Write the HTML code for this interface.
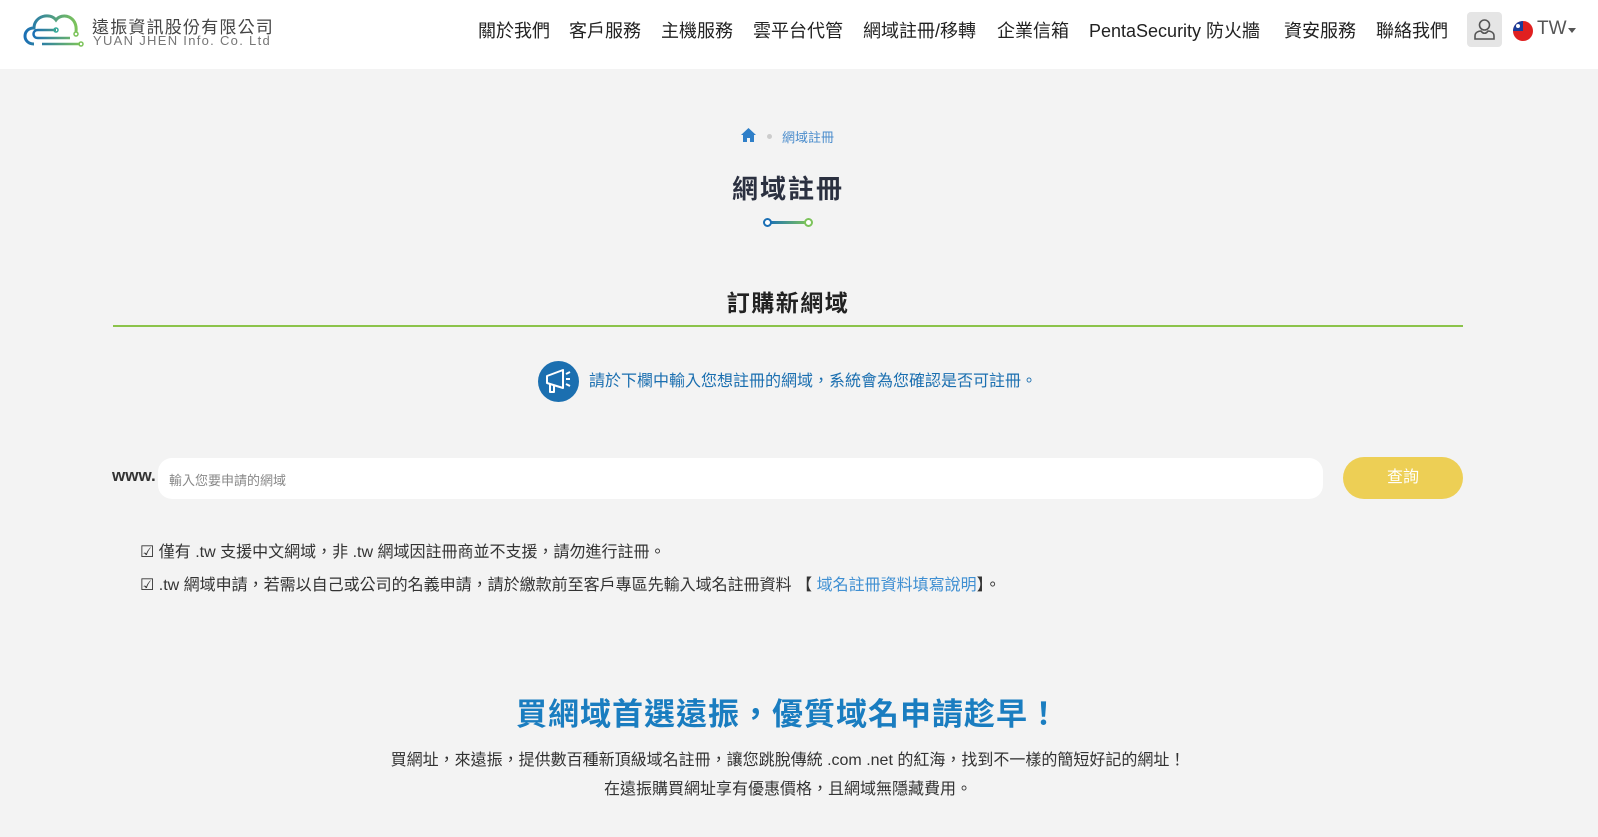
<!DOCTYPE html>
<html><head><meta charset="utf-8"><style>
*{margin:0;padding:0;box-sizing:border-box}
body{width:1598px;height:837px;overflow:hidden;background:#f3f3f3;font-family:"Liberation Sans","Noto Sans CJK TC",sans-serif;color:#333;position:relative}
.hdr{position:absolute;left:0;top:0;width:1598px;height:69px;background:#fff}
.abs{position:absolute;white-space:nowrap}
.nav{top:17px;font-size:18px;color:#222}
.c{left:0;width:1576px;text-align:center}
</style></head><body>
<div class="hdr">
<svg class="abs" style="left:20px;top:8px" width="66" height="44" viewBox="0 0 66 44">
<defs><linearGradient id="g" x1="0" x2="1"><stop offset="0" stop-color="#1a6fb5"/><stop offset="1" stop-color="#7cc35a"/></linearGradient></defs>
<path d="M14 36 C2 36 2 20 14 20 C14 8 30 4 36 12 C42 4 58 8 56 24" fill="none" stroke="url(#g)" stroke-width="3"/>
<path d="M36 22 H18 C12 22 12 30 18 30 H50 M22 36 H60" fill="none" stroke="url(#g)" stroke-width="2.5"/>
<circle cx="36" cy="22" r="2" fill="none" stroke="#3a9" stroke-width="1.5"/><circle cx="61" cy="36" r="2" fill="none" stroke="#7cc35a" stroke-width="1.5"/><circle cx="56" cy="26" r="2" fill="none" stroke="#7cc35a" stroke-width="1.5"/>
</svg>
<div class="abs" style="left:92px;top:13px;font-size:17px;color:#444;letter-spacing:1.2px">遠振資訊股份有限公司</div>
<div class="abs" style="left:93px;top:33px;font-size:13px;color:#777;letter-spacing:1.3px">YUAN JHEN Info. Co. Ltd</div>
<div class="abs nav" style="left:478px">關於我們</div>
<div class="abs nav" style="left:569px">客戶服務</div>
<div class="abs nav" style="left:661px">主機服務</div>
<div class="abs nav" style="left:753px">雲平台代管</div>
<div class="abs nav" style="left:863px">網域註冊/移轉</div>
<div class="abs nav" style="left:997px">企業信箱</div>
<div class="abs nav" style="left:1089px">PentaSecurity 防火牆</div>
<div class="abs nav" style="left:1284px">資安服務</div>
<div class="abs nav" style="left:1376px">聯絡我們</div>
<div class="abs" style="left:1467px;top:12px;width:35px;height:35px;background:#e5e5e5;border-radius:4px"></div>
<svg class="abs" style="left:1472px;top:17px" width="25" height="25" viewBox="0 0 25 25" fill="none" stroke="#555" stroke-width="1.6"><circle cx="12.5" cy="8" r="5"/><path d="M3 22 V19 C3 15 7 14 9 14 C11 17 14 17 16 14 C18 14 22 15 22 19 V22 Z"/></svg>
<svg class="abs" style="left:1513px;top:21px" width="20" height="20" viewBox="0 0 20 20"><circle cx="10" cy="10" r="10" fill="#e02020"/><path d="M0 10 A10 10 0 0 1 10 0 V10Z" fill="#1a3d9a"/><circle cx="5" cy="5" r="2" fill="#fff"/></svg>
<div class="abs" style="left:1537px;top:18px;font-size:19px;color:#555">TW</div>
<div class="abs" style="left:1568px;top:28px;border:4px solid transparent;border-top:5px solid #555"></div>
</div>
<svg class="abs" style="left:741px;top:128px" width="15" height="14" viewBox="0 0 15 14"><path d="M7.5 0 L15 7 H13 V14 H9 V10 H6 V14 H2 V7 H0Z" fill="#2f7fc8"/></svg>
<div class="abs" style="left:767px;top:134px;width:5px;height:5px;border-radius:50%;background:#ccc"></div>
<div class="abs" style="left:782px;top:127px;font-size:13px;color:#4a8ccc">網域註冊</div>
<div class="abs c" style="top:169px;font-size:26px;font-weight:bold;color:#2b3040;letter-spacing:2px">網域註冊</div>
<div class="abs" style="left:768px;top:221px;width:40px;height:3px;background:linear-gradient(90deg,#1a6fb5,#7cc35a)"></div>
<div class="abs" style="left:763px;top:218px;width:9px;height:9px;border-radius:50%;background:#fff;border:2px solid #1a6fb5"></div>
<div class="abs" style="left:804px;top:218px;width:9px;height:9px;border-radius:50%;background:#fff;border:2px solid #7cc35a"></div>
<div class="abs c" style="top:284px;font-size:23px;font-weight:bold;color:#222;letter-spacing:1.5px">訂購新網域</div>
<div class="abs" style="left:113px;top:325px;width:1350px;height:2px;background:#8bc34a"></div>
<svg class="abs" style="left:538px;top:361px" width="41" height="41" viewBox="0 0 41 41"><circle cx="20.5" cy="20.5" r="20.5" fill="#1b6fb0"/><g fill="none" stroke="#fff" stroke-width="2" stroke-linejoin="round"><path d="M9 15 L25 9 V27 L9 22Z"/><path d="M12 23 V31 H16 V24"/><path d="M28 13 L32 11 M28 18 H32 M28 23 L32 25"/></g></svg>
<div class="abs" style="left:589px;top:367px;font-size:16px;color:#1b6fb0">請於下欄中輸入您想註冊的網域，系統會為您確認是否可註冊。</div>
<div class="abs" style="left:112px;top:466px;font-size:17px;font-weight:bold;color:#333">www.</div>
<div class="abs" style="left:158px;top:458px;width:1165px;height:41px;background:#fff;border-radius:14px"></div>
<div class="abs" style="left:169px;top:470px;font-size:13px;color:#888">輸入您要申請的網域</div>
<div class="abs" style="left:1343px;top:457px;width:120px;height:42px;background:#edcf55;border-radius:21px;color:#fff;font-size:16px;text-align:center;line-height:42px">查詢</div>
<div class="abs" style="left:140px;top:538px;font-size:16px;color:#333">☑ 僅有 .tw 支援中文網域，非 .tw 網域因註冊商並不支援，請勿進行註冊。</div>
<div class="abs" style="left:140px;top:571px;font-size:16px;color:#333">☑ .tw 網域申請，若需以自己或公司的名義申請，請於繳款前至客戶專區先輸入域名註冊資料 【 <span style="color:#3f8fd2">域名註冊資料填寫說明</span>】。</div>
<div class="abs c" style="top:689px;font-size:31px;font-weight:bold;color:#1a7dc0;letter-spacing:1px">買網域首選遠振，優質域名申請趁早！</div>
<div class="abs c" style="top:746px;font-size:16px;color:#333">買網址，來遠振，提供數百種新頂級域名註冊，讓您跳脫傳統 .com .net 的紅海，找到不一樣的簡短好記的網址！</div>
<div class="abs c" style="top:775px;font-size:16px;color:#333">在遠振購買網址享有優惠價格，且網域無隱藏費用。</div>
</body></html>
